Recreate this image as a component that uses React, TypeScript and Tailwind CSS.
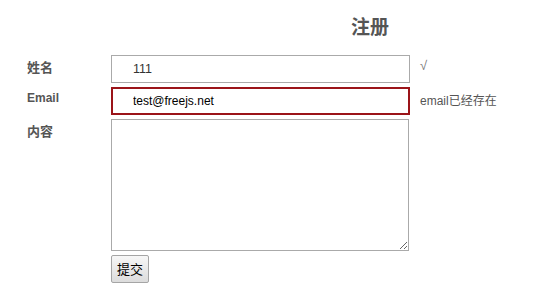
import React from "react";

export default function App() {
  const cjk = { fontFamily: '"Liberation Sans", "Noto Sans CJK SC", sans-serif' };
  return (
    <div className="w-[540px] h-[300px] bg-white text-[#555]" style={cjk}>
      <div className="h-[55px] pl-[351px] pt-[16px]">
        <h1 className="text-[19px] leading-[24px] font-bold text-[#555]">注册</h1>
      </div>
      <div className="flex flex-col gap-[4px]">
        <div className="flex items-start">
          <div className="w-[111px] pl-[27px] pt-[6px] text-[13px] leading-[14px] font-bold">姓名</div>
          <input
            defaultValue="111"
            className="w-[299px] h-[28px] border border-[#aaa] pl-[21px] text-[12.5px] text-[#333] outline-none bg-white"
          />
          <div className="ml-[10px] pt-[4px] text-[13px] leading-[14px] text-[#777]">√</div>
        </div>
        <div className="flex items-start">
          <div className="w-[111px] pl-[27px] pt-[5px] text-[12px] leading-[12px] font-bold">Email</div>
          <input
            defaultValue="test@freejs.net"
            className="w-[299px] h-[28px] border-2 border-[#9b1419] pl-[20px] text-[12px] text-black outline-none bg-white"
          />
          <div className="ml-[10px] pt-[7px] text-[12px] leading-[14px] text-[#555]">email已经存在</div>
        </div>
        <div className="flex items-start">
          <div className="w-[111px] pl-[27px] pt-[6px] text-[13px] leading-[14px] font-bold">内容</div>
          <textarea className="w-[298px] h-[132px] border border-[#aaa] outline-none bg-white text-[12px]" />
        </div>
        <div className="flex">
          <div className="w-[111px]" />
          <button className="w-[38px] h-[28px] border border-[#a5a5a5] rounded-[2px] bg-gradient-to-b from-[#f7f7f7] to-[#dcdcdc] text-[13px] text-black leading-none">
            提交
          </button>
        </div>
      </div>
    </div>
  );
}
